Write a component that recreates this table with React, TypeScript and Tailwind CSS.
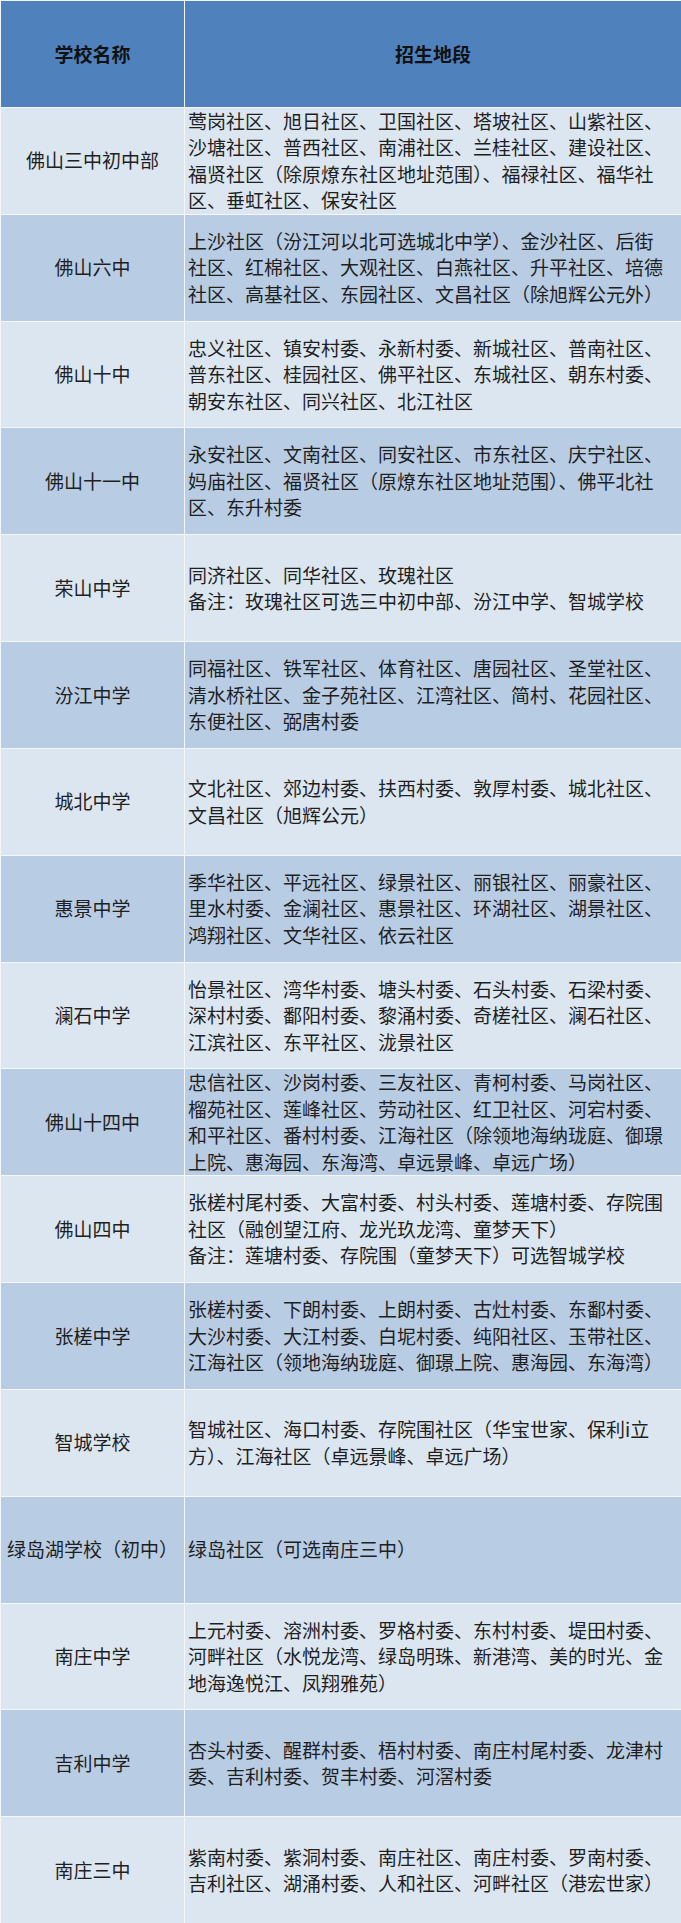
import React from "react";

type Row = { name: string; lines: string[] };

const rows: Row[] = [
  {
    name: "佛山三中初中部",
    lines: [
      "莺岗社区、旭日社区、卫国社区、塔坡社区、山紫社区、",
      "沙塘社区、普西社区、南浦社区、兰桂社区、建设社区、",
      "福贤社区（除原燎东社区地址范围）、福禄社区、福华社",
      "区、垂虹社区、保安社区",
    ],
  },
  {
    name: "佛山六中",
    lines: [
      "上沙社区（汾江河以北可选城北中学）、金沙社区、后街",
      "社区、红棉社区、大观社区、白燕社区、升平社区、培德",
      "社区、高基社区、东园社区、文昌社区（除旭辉公元外）",
    ],
  },
  {
    name: "佛山十中",
    lines: [
      "忠义社区、镇安村委、永新村委、新城社区、普南社区、",
      "普东社区、桂园社区、佛平社区、东城社区、朝东村委、",
      "朝安东社区、同兴社区、北江社区",
    ],
  },
  {
    name: "佛山十一中",
    lines: [
      "永安社区、文南社区、同安社区、市东社区、庆宁社区、",
      "妈庙社区、福贤社区（原燎东社区地址范围）、佛平北社",
      "区、东升村委",
    ],
  },
  {
    name: "荣山中学",
    lines: ["同济社区、同华社区、玫瑰社区", "备注：玫瑰社区可选三中初中部、汾江中学、智城学校"],
  },
  {
    name: "汾江中学",
    lines: [
      "同福社区、铁军社区、体育社区、唐园社区、圣堂社区、",
      "清水桥社区、金子苑社区、江湾社区、简村、花园社区、",
      "东便社区、弼唐村委",
    ],
  },
  {
    name: "城北中学",
    lines: ["文北社区、郊边村委、扶西村委、敦厚村委、城北社区、", "文昌社区（旭辉公元）"],
  },
  {
    name: "惠景中学",
    lines: [
      "季华社区、平远社区、绿景社区、丽银社区、丽豪社区、",
      "里水村委、金澜社区、惠景社区、环湖社区、湖景社区、",
      "鸿翔社区、文华社区、依云社区",
    ],
  },
  {
    name: "澜石中学",
    lines: [
      "怡景社区、湾华村委、塘头村委、石头村委、石梁村委、",
      "深村村委、鄱阳村委、黎涌村委、奇槎社区、澜石社区、",
      "江滨社区、东平社区、泷景社区",
    ],
  },
  {
    name: "佛山十四中",
    lines: [
      "忠信社区、沙岗村委、三友社区、青柯村委、马岗社区、",
      "榴苑社区、莲峰社区、劳动社区、红卫社区、河宕村委、",
      "和平社区、番村村委、江海社区（除领地海纳珑庭、御璟",
      "上院、惠海园、东海湾、卓远景峰、卓远广场）",
    ],
  },
  {
    name: "佛山四中",
    lines: [
      "张槎村尾村委、大富村委、村头村委、莲塘村委、存院围",
      "社区（融创望江府、龙光玖龙湾、童梦天下）",
      "备注：莲塘村委、存院围（童梦天下）可选智城学校",
    ],
  },
  {
    name: "张槎中学",
    lines: [
      "张槎村委、下朗村委、上朗村委、古灶村委、东鄱村委、",
      "大沙村委、大江村委、白坭村委、纯阳社区、玉带社区、",
      "江海社区（领地海纳珑庭、御璟上院、惠海园、东海湾）",
    ],
  },
  {
    name: "智城学校",
    lines: ["智城社区、海口村委、存院围社区（华宝世家、保利i立", "方）、江海社区（卓远景峰、卓远广场）"],
  },
  {
    name: "绿岛湖学校（初中）",
    lines: ["绿岛社区（可选南庄三中）"],
  },
  {
    name: "南庄中学",
    lines: [
      "上元村委、溶洲村委、罗格村委、东村村委、堤田村委、",
      "河畔社区（水悦龙湾、绿岛明珠、新港湾、美的时光、金",
      "地海逸悦江、凤翔雅苑）",
    ],
  },
  {
    name: "吉利中学",
    lines: ["杏头村委、醒群村委、梧村村委、南庄村尾村委、龙津村", "委、吉利村委、贺丰村委、河滘村委"],
  },
  {
    name: "南庄三中",
    lines: [
      "紫南村委、紫洞村委、南庄社区、南庄村委、罗南村委、",
      "吉利社区、湖涌村委、人和社区、河畔社区（港宏世家）",
    ],
  },
];

export default function App() {
  return (
    <div
      className="w-[681px] h-[1923px] bg-[#f4f6f9] pt-px pl-px grid grid-cols-[183px_1fr] grid-rows-[repeat(18,minmax(0,1fr))] gap-px text-[19px] leading-[26.5px] text-[#1f1f1f] overflow-hidden"
      style={{ fontFamily: '"Noto Sans CJK SC", "Noto Sans", sans-serif' }}
    >
      <div className="bg-[#4f81bd] flex items-center justify-center font-bold text-[#111]">学校名称</div>
      <div className="bg-[#4f81bd] flex items-center justify-center font-bold text-[#111]">招生地段</div>
      {rows.map((r, i) => {
        const bg = i % 2 === 0 ? "bg-[#dce6f1]" : "bg-[#b8cce4]";
        return (
          <React.Fragment key={r.name}>
            <div className={`${bg} flex items-center justify-center whitespace-nowrap`}>{r.name}</div>
            <div className={`${bg} flex flex-col justify-center pl-[3px]`}>
              {r.lines.map((l, j) => (
                <div key={j} className="whitespace-nowrap">
                  {l}
                </div>
              ))}
            </div>
          </React.Fragment>
        );
      })}
    </div>
  );
}
